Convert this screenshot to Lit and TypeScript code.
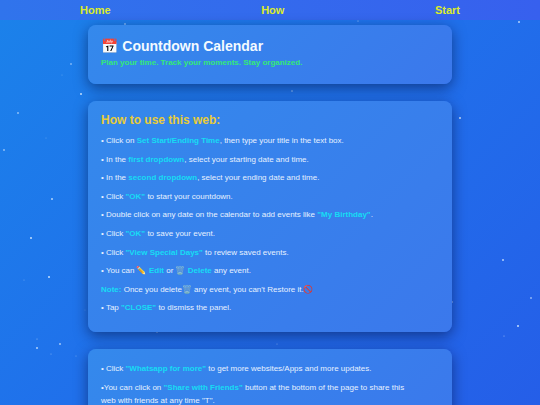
import { LitElement, html, css, svg } from "lit";
import { customElement } from "lit/decorators.js";

type Star = [x: number, y: number, size: number, opacity: number];

const STARS: Star[] = [
  [125, 24, 2, 0.5], [71, 64, 2, 0.5], [62, 75, 1, 0.4], [81, 94, 2, 0.9],
  [358, 21, 1, 0.9], [519, 22, 2, 0.8], [292, 91, 2, 0.4], [18, 113, 2, 0.6],
  [46, 138, 1, 0.4], [4, 150, 2, 0.6], [52, 199, 2, 0.8], [31, 238, 2, 0.9],
  [49, 277, 2, 0.9], [24, 280, 1, 0.5], [460, 118, 2, 0.9], [503, 260, 2, 0.8],
  [531, 298, 2, 0.6], [452, 302, 2, 0.5], [37, 339, 1, 0.7], [37, 348, 2, 0.8],
  [60, 344, 2, 0.7], [51, 354, 1, 0.6], [76, 356, 1, 0.5], [157, 332, 2, 0.4],
  [277, 344, 1, 0.6], [518, 326, 2, 0.9], [504, 336, 1, 0.8], [85, 310, 1, 0.3],
];

@customElement("app-root")
export class AppRoot extends LitElement {
  static styles = css`
    :host {
      display: block;
      position: relative;
      box-sizing: border-box;
      height: 100vh;
      overflow: hidden;
      font-family: "Liberation Sans", Arial, "Noto Color Emoji", sans-serif;
      color: #e6f1ff;
      background: linear-gradient(135deg, #1b82ea 0%, #2070eb 50%, #255ee8 100%);
    }
    .stars {
      position: absolute;
      inset: 0;
      width: 100%;
      height: 100%;
    }
    .star {
      fill: #d5eaff;
    }
    .nav {
      position: relative;
      display: flex;
      justify-content: space-between;
      padding: 0 80px;
      line-height: 20px;
      background: linear-gradient(90deg, #3074ec, #3760ee);
    }
    .nav-link {
      font-size: 11px;
      font-weight: bold;
      color: #dcec2c;
      text-decoration: none;
    }
    .page {
      position: relative;
      display: flex;
      flex-direction: column;
      gap: 17px;
      padding: 5px 88px;
    }
    .card {
      padding: 13px;
      border-radius: 8px;
      background: linear-gradient(135deg, #3489ec, #3b78ec);
      box-shadow: 0 4px 14px rgba(0, 10, 50, 0.5);
    }
    .title {
      margin: 0;
      font-size: 14px;
      line-height: 17px;
      color: #f3faff;
    }
    .tagline {
      margin: 0;
      font-size: 8px;
      line-height: 16px;
      font-weight: bold;
      color: #34e878;
    }
    .heading {
      margin: 0 0 8px;
      font-size: 12px;
      line-height: 12px;
      color: #e8cc38;
    }
    .step {
      margin: 0 0 5px;
      font-size: 8px;
      line-height: 1.7;
    }
    .step:last-child {
      margin-bottom: 4px;
    }
    .key {
      color: #16dcf4;
    }
  `;

  render() {
    return html`
      <svg class="stars" aria-hidden="true">
        ${STARS.map(
          ([x, y, size, opacity]) =>
            svg`<circle class="star" cx=${x} cy=${y} r=${size / 2} opacity=${opacity}></circle>`
        )}
      </svg>
      <nav class="nav">
        <a class="nav-link" href="#home">Home</a>
        <a class="nav-link" href="#how">How</a>
        <a class="nav-link" href="#start">Start</a>
      </nav>
      <main class="page">
        <header class="card">
          <h1 class="title">📅 Countdown Calendar</h1>
          <p class="tagline">Plan your time. Track your moments. Stay organized.</p>
        </header>
        <section class="card">
          <h2 class="heading">How to use this web:</h2>
          <p class="step">• Click on <b class="key">Set Start/Ending Time</b>, then type your title in the text box.</p>
          <p class="step">• In the <b class="key">first dropdown</b>, select your starting date and time.</p>
          <p class="step">• In the <b class="key">second dropdown</b>, select your ending date and time.</p>
          <p class="step">• Click <b class="key">"OK"</b> to start your countdown.</p>
          <p class="step">• Double click on any date on the calendar to add events like <b class="key">"My Birthday"</b>.</p>
          <p class="step">• Click <b class="key">"OK"</b> to save your event.</p>
          <p class="step">• Click <b class="key">"View Special Days"</b> to review saved events.</p>
          <p class="step">• You can <b class="key">✏️ Edit</b> or <b class="key">🗑️ Delete</b> any event.</p>
          <p class="step"><b class="key">Note:</b> Once you delete🗑️ any event, you can't Restore it.🚫</p>
          <p class="step">• Tap <b class="key">"CLOSE"</b> to dismiss the panel.</p>
        </section>
        <section class="card">
          <p class="step">• Click <b class="key">"Whatsapp for more"</b> to get more websites/Apps and more updates.</p>
          <p class="step">•You can click on <b class="key">"Share with Friends"</b> button at the bottom of the page to share this<br />web with friends at any time "T".</p>
        </section>
      </main>
    `;
  }
}
